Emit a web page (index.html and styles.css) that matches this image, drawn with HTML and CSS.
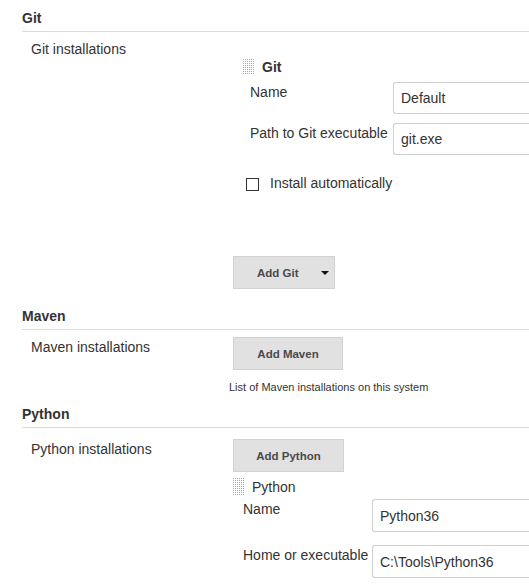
FILE: index.html
```html
<!DOCTYPE html>
<html lang="en">
<head>
<meta charset="utf-8">
<title>Global Tool Configuration</title>
<link rel="stylesheet" href="styles.css">
</head>
<body>
<div class="page">

  <section class="sec">
    <h2 class="sec-title">Git</h2>
    <div class="row row-git">
      <div class="row-label">Git installations</div>
      <div class="row-body">
        <div class="item item-git">
          <div class="item-head"><span class="grip"></span><span class="item-name bold">Git</span></div>
          <div class="fields fields-git">
            <div class="field"><span class="field-label">Name</span><input class="text-input" type="text" value="Default"></div>
            <div class="field"><span class="field-label">Path to Git executable</span><input class="text-input" type="text" value="git.exe"></div>
          </div>
          <div class="check"><span class="check-box"></span><span>Install automatically</span></div>
        </div>
        <button class="btn btn-git" type="button">Add Git<span class="caret"></span></button>
      </div>
    </div>
  </section>

  <section class="sec">
    <h2 class="sec-title">Maven</h2>
    <div class="row row-maven">
      <div class="row-label">Maven installations</div>
      <div class="row-body">
        <button class="btn btn-maven" type="button">Add Maven</button>
        <div class="desc">List of Maven installations on this system</div>
      </div>
    </div>
  </section>

  <section class="sec">
    <h2 class="sec-title">Python</h2>
    <div class="row row-python">
      <div class="row-label">Python installations</div>
      <div class="row-body">
        <button class="btn btn-python" type="button">Add Python</button>
        <div class="item item-python">
          <div class="item-head"><span class="grip"></span><span class="item-name">Python</span></div>
          <div class="fields fields-python">
            <div class="field"><span class="field-label">Name</span><input class="text-input" type="text" value="Python36"></div>
            <div class="field"><span class="field-label">Home or executable</span><input class="text-input" type="text" value="C:\Tools\Python36"></div>
          </div>
        </div>
      </div>
    </div>
  </section>

</div>
</body>
</html>
```

FILE: styles.css
```css
html, body {
  margin: 0;
  padding: 0;
  overflow: hidden;
  background: #fff;
}

body {
  font-family: "Liberation Sans", Arial, sans-serif;
  font-size: 14px;
  line-height: 16px;
  color: #333;
}

.page {
  padding-left: 22px;
  padding-top: 10px;
}

.sec-title {
  margin: 0;
  padding: 0 0 5px 0;
  font-size: 14px;
  line-height: 16px;
  font-weight: bold;
  color: #333;
  border-bottom: 1px solid #dcdcdc;
}

.row {
  display: grid;
  grid-template-columns: 207px 1fr;
  padding-top: 7px;
}

.row-label {
  padding-left: 9px;
  padding-top: 2px;
}

.row-body {
  display: flex;
  flex-direction: column;
  align-items: flex-start;
  min-width: 0;
}

.row-git { padding-bottom: 19px; }
.row-maven { padding-bottom: 12px; }
.row-python { padding-top: 11px; }

/* items */
.item {
  align-self: stretch;
}

.item-head {
  display: flex;
  align-items: center;
  gap: 8px;
  height: 16px;
}

.grip {
  width: 11px;
  height: 16px;
  background-image:
    linear-gradient(90deg, transparent 1px, #fff 1px),
    linear-gradient(transparent 1px, #fff 1px);
  background-size: 2px 2px, 2px 2px;
  background-color: #a8a8a8;
}

.bold { font-weight: bold; }

.item-git {
  margin-left: 14px;
  margin-top: 20px;
}

.item-python {
  margin-left: 4px;
  margin-top: 6px;
}

.item-python .item-head { height: 17px; }
.item-python .grip { height: 17px; }

.fields {
  display: flex;
  flex-direction: column;
}

.field {
  display: flex;
  align-items: flex-start;
}

.field-label {
  flex: none;
  padding-top: 2px;
}

.text-input {
  box-sizing: border-box;
  flex: 1;
  min-width: 0;
  margin: 0;
  padding: 0 7px;
  border: 1px solid #cfcfcf;
  border-right: 0;
  border-radius: 3px 0 0 3px;
  font-family: "Liberation Sans", Arial, sans-serif;
  font-size: 14px;
  color: #333;
  background: #fff;
  outline: none;
}

.fields-git {
  margin-left: 7px;
  margin-top: 7px;
  gap: 9px;
}
.fields-git .field-label { width: 143px; }
.fields-git .text-input { height: 32px; }

.fields-python {
  margin-left: 10px;
  margin-top: 4px;
  gap: 13px;
}
.fields-python .field-label { width: 129px; }
.fields-python .text-input { height: 33px; }

.check {
  display: flex;
  align-items: flex-start;
  margin-top: 20px;
  margin-left: 3px;
}

.check-box {
  box-sizing: border-box;
  width: 13px;
  height: 13px;
  margin-top: 3px;
  margin-right: 11px;
  border: 1px solid #333;
  background: #fff;
}

/* buttons */
.btn {
  box-sizing: border-box;
  height: 33px;
  margin: 0 0 0 4px;
  padding: 0;
  border: 1px solid #d2d2d2;
  border-radius: 0;
  background: #e1e1e1;
  font-family: "Liberation Sans", Arial, sans-serif;
  font-size: 11.5px;
  font-weight: bold;
  color: #4a4a4a;
  display: flex;
  align-items: center;
  justify-content: center;
}

.btn-git {
  width: 102px;
  justify-content: flex-start;
  padding-left: 23px;
  margin-top: 65px;
}

.caret {
  width: 0;
  height: 0;
  margin-left: 22px;
  border-left: 4px solid transparent;
  border-right: 4px solid transparent;
  border-top: 4px solid #111;
}

.btn-maven { width: 110px; }
.btn-python { width: 111px; }

.desc {
  margin-top: 10px;
  font-size: 11px;
  line-height: 14px;
  color: #333;
}
```
